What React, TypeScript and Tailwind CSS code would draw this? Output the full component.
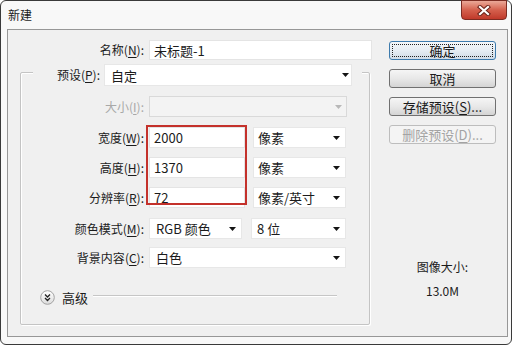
import type { ReactNode } from 'react';

function Key({ k }: { k: string }) {
  return <span className="underline underline-offset-[2px] decoration-1">{k}</span>;
}

function Label({ text, k, className = '' }: { text: string; k: string; className?: string }) {
  return (
    <span className={`shrink-0 text-right text-[12px] whitespace-nowrap ${className}`}>
      {text}(<Key k={k} />):
    </span>
  );
}

function Arrow({ disabled }: { disabled?: boolean }) {
  return (
    <svg width="7" height="4" viewBox="0 0 7 4" className="shrink-0">
      <path d="M0 0h7L3.5 4z" fill={disabled ? '#b8b8b8' : '#141414'} />
    </svg>
  );
}

function Dropdown({ className, children, disabled }: { className: string; children?: ReactNode; disabled?: boolean }) {
  return (
    <div
      className={`flex items-center justify-between shrink-0 text-[13px] ${
        disabled ? 'bg-[#f3f3f3] border border-[#d9d9d9]' : 'bg-white border border-[#e7e7e7]'
      } ${className}`}
    >
      <span>{children}</span>
      <Arrow disabled={disabled} />
    </div>
  );
}

function TextBox({ className, children }: { className: string; children: ReactNode }) {
  return (
    <div className={`flex items-center shrink-0 bg-white border border-[#e4e4e4] text-[13px] pl-[4px] ${className}`}>
      {children}
    </div>
  );
}

function Btn({ children, primary, disabled }: { children: ReactNode; primary?: boolean; disabled?: boolean }) {
  return (
    <div
      className={`relative h-[19px] flex items-center justify-center rounded-[3px] border text-[13px] ${
        primary
          ? 'border-[#3d7bad] bg-linear-to-b from-[#f4f7fa] via-[#e6edf3] to-[#cfdbe6]'
          : disabled
          ? 'border-[#bdbdbd] bg-[#f4f4f4] text-[#a3a3a3]'
          : 'border-[#707070] bg-linear-to-b from-[#f5f5f5] via-[#e8e8e8] to-[#d4d4d4]'
      }`}
    >
      {primary && <div className="absolute inset-[2px] border border-dotted border-[#222]" />}
      <span className="relative">{children}</span>
    </div>
  );
}

function Row({ children, className = '' }: { children: ReactNode; className?: string }) {
  return <div className={`flex items-center h-[21px] ${className}`}>{children}</div>;
}

export default function App() {
  return (
    <div className="w-[516px] h-[346px] bg-white font-['Noto_Sans_CJK_SC',sans-serif] text-[#1b1b1b] leading-none">
      <div className="relative w-[512px] h-[345px] rounded-[6px] border border-[#3a3a3a] bg-[#f8f8f8]">
        <div className="h-[28px] flex items-center pl-[7px] text-[12px]">新建</div>

        {/* close button */}
        <div className="absolute left-[460px] -top-px w-[46px] h-[20px] rounded-b-[4px] border border-[#7c2c22] bg-linear-to-b from-[#eaa898] via-[#d4604d] to-[#c0392a] flex items-center justify-center">
          <svg width="14" height="11" viewBox="0 0 14 11">
            <path d="M3 2L11 9M11 2L3 9" stroke="#6b231a" strokeWidth="4.2" strokeLinecap="square" />
            <path d="M3 2L11 9M11 2L3 9" stroke="#ffffff" strokeWidth="2.2" strokeLinecap="square" />
          </svg>
        </div>

        <div className="ml-[6px] w-[501px] h-[308px] border border-[#979797] bg-[#f0f0f0] flex">
          {/* left column */}
          <div className="w-[381px] shrink-0">
            <div className="mt-[10px] h-[20px] flex items-center">
              <Label text="名称" k="N" className="w-[136px]" />
              <TextBox className="ml-[5px] w-[223px] h-[20px]">未标题-1</TextBox>
            </div>

            <div className="mt-[12px] ml-[12px] w-[350px] h-[253px] border border-[#c4c4c4] rounded-[2px] shadow-[inset_1px_1px_0_#ffffff,1px_1px_0_#ffffff]">
              <div className="-mt-[9px] ml-[12px] w-fit h-[22px] flex items-center bg-[#f0f0f0] pr-[10px]">
                <Label text="预设" k="P" className="w-[67px]" />
                <Dropdown className="ml-[4px] w-[248px] h-[22px] pl-[6px] pr-[2px]">自定</Dropdown>
              </div>

              <Row className="mt-[10px]">
                <Label text="大小" k="I" className="w-[123px] text-[#a8a8a8]" />
                <Dropdown disabled className="ml-[5px] w-[198px] h-[21px] pl-[5px] pr-[4px]" />
              </Row>

              <div className="relative mt-[10px]">
                <Row>
                  <Label text="宽度" k="W" className="w-[123px]" />
                  <TextBox className="ml-[5px] w-[96px] h-[21px]">2000</TextBox>
                  <Dropdown className="ml-[8px] w-[93px] h-[21px] pl-[4px] pr-[5px]">像素</Dropdown>
                </Row>
                <Row className="mt-[9px]">
                  <Label text="高度" k="H" className="w-[123px]" />
                  <TextBox className="ml-[5px] w-[96px] h-[21px]">1370</TextBox>
                  <Dropdown className="ml-[8px] w-[93px] h-[21px] pl-[4px] pr-[5px]">像素</Dropdown>
                </Row>
                <Row className="mt-[9px]">
                  <Label text="分辨率" k="R" className="w-[123px]" />
                  <TextBox className="ml-[5px] w-[96px] h-[21px]">72</TextBox>
                  <Dropdown className="ml-[8px] w-[93px] h-[21px] pl-[4px] pr-[5px]">像素/英寸</Dropdown>
                </Row>
                <div className="absolute -top-[2px] left-[125px] w-[101px] h-[80px] border-2 border-[#c4312b]" />
              </div>

              <Row className="mt-[10px]">
                <Label text="颜色模式" k="M" className="w-[123px]" />
                <Dropdown className="ml-[5px] w-[93px] h-[21px] pl-[6px] pr-[5px]">RGB 颜色</Dropdown>
                <Dropdown className="ml-[9px] w-[95px] h-[21px] pl-[5px] pr-[5px]">8 位</Dropdown>
              </Row>

              <Row className="mt-[8px]">
                <Label text="背景内容" k="C" className="w-[123px]" />
                <Dropdown className="ml-[5px] w-[197px] h-[21px] pl-[6px] pr-[5px]">白色</Dropdown>
              </Row>

              <div className="mt-[22px] ml-[19px] h-[14px] flex items-center">
                <svg width="15" height="15" viewBox="0 0 15 15" className="shrink-0">
                  <defs>
                    <linearGradient id="adv" x1="0" y1="0" x2="0" y2="1">
                      <stop offset="0" stopColor="#ffffff" />
                      <stop offset="1" stopColor="#dcdcdc" />
                    </linearGradient>
                  </defs>
                  <circle cx="7.5" cy="7.5" r="6.8" fill="url(#adv)" stroke="#a2a2a2" />
                  <path d="M5 4.5L7.5 7L10 4.5M5 8L7.5 10.5L10 8" fill="none" stroke="#222" strokeWidth="1.3" />
                </svg>
                <span className="ml-[7px] text-[13px]">高级</span>
                <div className="ml-[5px] mr-[32px] flex-1 h-[2px] border-t border-[#c6c6c6] border-b-white border-b -mt-[3px]" />
              </div>
            </div>
          </div>

          {/* right column */}
          <div className="w-[107px] shrink-0 flex flex-col">
            <div className="mt-[11px]">
              <Btn primary>确定</Btn>
            </div>
            <div className="mt-[9px]">
              <Btn>取消</Btn>
            </div>
            <div className="mt-[9px]">
              <Btn>
                存储预设(<Key k="S" />)...
              </Btn>
            </div>
            <div className="mt-[9px]">
              <Btn disabled>
                删除预设(<Key k="D" />)...
              </Btn>
            </div>
            <div className="mt-[117px] text-center text-[12px]">图像大小:</div>
            <div className="mt-[12px] text-center text-[12px]">13.0M</div>
          </div>
        </div>
      </div>
    </div>
  );
}
